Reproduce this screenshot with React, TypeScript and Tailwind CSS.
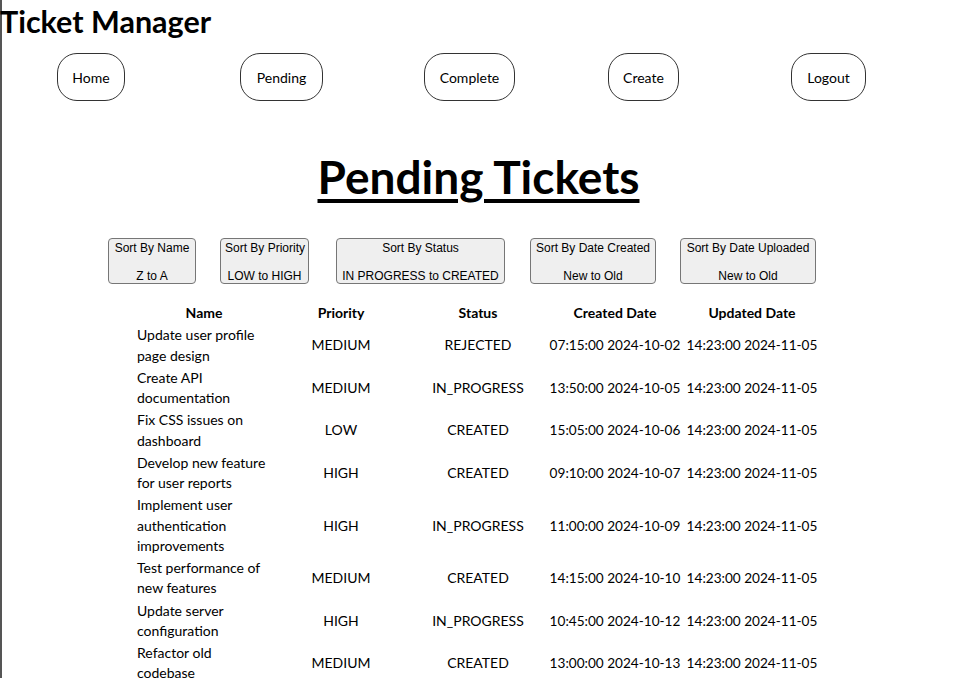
const NAV = [
  { label: "Home", cls: "ml-[57px] w-[68px]" },
  { label: "Pending", cls: "ml-[115px] w-[83px]" },
  { label: "Complete", cls: "ml-[101px] w-[91px]" },
  { label: "Create", cls: "ml-[93px] w-[71px]" },
  { label: "Logout", cls: "ml-[112px] w-[75px]" },
];

const SORTS = [
  { title: "Sort By Name", order: "Z to A", cls: "ml-[108px] w-[88px]" },
  { title: "Sort By Priority", order: "LOW to HIGH", cls: "ml-[24px] w-[89px]" },
  { title: "Sort By Status", order: "IN PROGRESS to CREATED", cls: "ml-[27px] w-[169px]" },
  { title: "Sort By Date Created", order: "New to Old", cls: "ml-[25px] w-[126px]" },
  { title: "Sort By Date Uploaded", order: "New to Old", cls: "ml-[24px] w-[136px]" },
];

type Ticket = {
  name: string;
  priority: "LOW" | "MEDIUM" | "HIGH";
  status: "CREATED" | "IN_PROGRESS" | "REJECTED";
  created: string;
  updated: string;
};

const TICKETS: Ticket[] = [
  { name: "Update user profile page design", priority: "MEDIUM", status: "REJECTED", created: "07:15:00 2024-10-02", updated: "14:23:00 2024-11-05" },
  { name: "Create API documentation", priority: "MEDIUM", status: "IN_PROGRESS", created: "13:50:00 2024-10-05", updated: "14:23:00 2024-11-05" },
  { name: "Fix CSS issues on dashboard", priority: "LOW", status: "CREATED", created: "15:05:00 2024-10-06", updated: "14:23:00 2024-11-05" },
  { name: "Develop new feature for user reports", priority: "HIGH", status: "CREATED", created: "09:10:00 2024-10-07", updated: "14:23:00 2024-11-05" },
  { name: "Implement user authentication improvements", priority: "HIGH", status: "IN_PROGRESS", created: "11:00:00 2024-10-09", updated: "14:23:00 2024-11-05" },
  { name: "Test performance of new features", priority: "MEDIUM", status: "CREATED", created: "14:15:00 2024-10-10", updated: "14:23:00 2024-11-05" },
  { name: "Update server configuration", priority: "HIGH", status: "IN_PROGRESS", created: "10:45:00 2024-10-12", updated: "14:23:00 2024-11-05" },
  { name: "Refactor old codebase", priority: "MEDIUM", status: "CREATED", created: "13:00:00 2024-10-13", updated: "14:23:00 2024-11-05" },
];

const COLS = "grid grid-cols-[134px_140px_134px_140px_134px]";

export default function App() {
  return (
    <div className="min-h-[678px] border-l-2 border-[#555] bg-white font-['Lato',sans-serif] text-black">
      <h1 className="-ml-[2px] pt-[3px] text-[30.5px] font-bold leading-[36px]">Ticket Manager</h1>

      <nav className="mt-[14px] flex -ml-[2px]">
        {NAV.map((n) => (
          <button
            key={n.label}
            type="button"
            className={`h-[48px] rounded-[20px] border border-[#333] bg-white text-[14px] ${n.cls}`}
          >
            {n.label}
          </button>
        ))}
      </nav>

      <h2 className="mt-[50px] text-center text-[46px] font-bold leading-[52px] underline decoration-[4px] underline-offset-[5px]">
        Pending Tickets
      </h2>

      <div className="mt-[35px] flex -ml-[2px]">
        {SORTS.map((s) => (
          <button
            key={s.title}
            type="button"
            className={`h-[46px] rounded-[4px] border border-[#767676] bg-[#efefef] px-[4px] pt-[2px] font-['Liberation_Sans',Arial,sans-serif] text-[12px] leading-[14px] whitespace-nowrap ${s.cls}`}
          >
            {s.title}
            <br />
            <br />
            {s.order}
          </button>
        ))}
      </div>

      <div className="ml-[135px] mt-[17px] text-[14px]">
        <div className={`${COLS} pt-[2px] pb-px text-center font-bold leading-[20.25px]`}>
          <span>Name</span>
          <span>Priority</span>
          <span>Status</span>
          <span>Created Date</span>
          <span>Updated Date</span>
        </div>
        {TICKETS.map((t) => (
          <div key={t.name} className={`${COLS} items-center py-px leading-[20.25px]`}>
            <span className="pr-1">{t.name}</span>
            <span className="text-center">{t.priority}</span>
            <span className="text-center">{t.status}</span>
            <span className="whitespace-nowrap text-center text-[13.6px]">{t.created}</span>
            <span className="whitespace-nowrap text-center text-[13.6px]">{t.updated}</span>
          </div>
        ))}
      </div>
    </div>
  );
}
